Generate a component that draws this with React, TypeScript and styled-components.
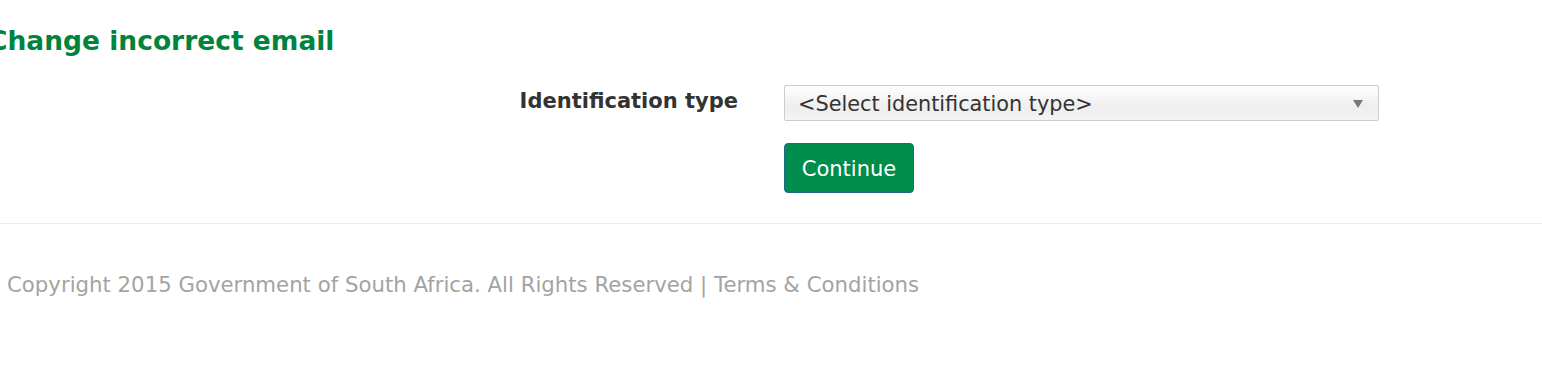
import styled, { createGlobalStyle } from "styled-components";

const GlobalStyle = createGlobalStyle`
  html, body {
    margin: 0;
    padding: 0;
    background: #fff;
  }
  body {
    font-family: "DejaVu Sans", Verdana, sans-serif;
    color: #333;
    overflow: hidden;
  }
`;

const Page = styled.div`
  width: 1542px;
  height: 392px;
  overflow: hidden;
`;

const Content = styled.section`
  margin-left: -12px;
  padding-top: 25px;
`;

const Heading = styled.h2`
  margin: 0 0 28px;
  font-size: 26.5px;
  font-weight: bold;
  color: #00843d;
  line-height: 32px;
`;

const FormRow = styled.div<{ $last?: boolean }>`
  display: grid;
  grid-template-columns: 750px 595px;
  column-gap: 46px;
  align-items: start;
  margin-bottom: ${(p) => (p.$last ? "0" : "22px")};
`;

const Label = styled.label`
  text-align: right;
  font-weight: bold;
  font-size: 21px;
  line-height: 32px;
  color: #333;
`;

const Select = styled.div`
  position: relative;
  height: 36px;
  box-sizing: border-box;
  border: 1px solid #ccc;
  border-radius: 2px;
  background: linear-gradient(#fff 0%, #eee 60%, #f4f4f4 100%);
  padding: 2px 30px 0 13px;
  font-size: 20.8px;
  line-height: 32px;
  color: #333;
  white-space: nowrap;
`;

const Arrow = styled.span`
  position: absolute;
  right: 15px;
  top: 14px;
  width: 0;
  height: 0;
  border-left: 5px solid transparent;
  border-right: 5px solid transparent;
  border-top: 8px solid #777;
`;

const Button = styled.button`
  height: 50px;
  width: 130px;
  box-sizing: border-box;
  background: #008c4b;
  color: #fff;
  border: 1px solid #1f6a8a;
  border-radius: 4px;
  font-family: inherit;
  font-size: 21px;
  padding: 2px 0 0;
`;

const Divider = styled.hr`
  margin: 30px 0 0;
  border: 0;
  border-top: 1px solid #eee;
`;

const Footer = styled.footer`
  padding: 49px 0 0 7px;
  font-size: 21.25px;
  color: #a5a3a1;
  line-height: 24px;
`;

const App = () => {
  return (
    <Page>
      <GlobalStyle />
      <Content>
        <Heading>Change incorrect email</Heading>
        <FormRow>
          <Label>Identification type</Label>
          <Select>
            &lt;Select identification type&gt;
            <Arrow />
          </Select>
        </FormRow>
        <FormRow $last>
          <span />
          <div>
            <Button>Continue</Button>
          </div>
        </FormRow>
      </Content>
      <Divider />
      <Footer>
        Copyright 2015 Government of South Africa. All Rights Reserved | Terms
        &amp; Conditions
      </Footer>
    </Page>
  );
};

export default App;
